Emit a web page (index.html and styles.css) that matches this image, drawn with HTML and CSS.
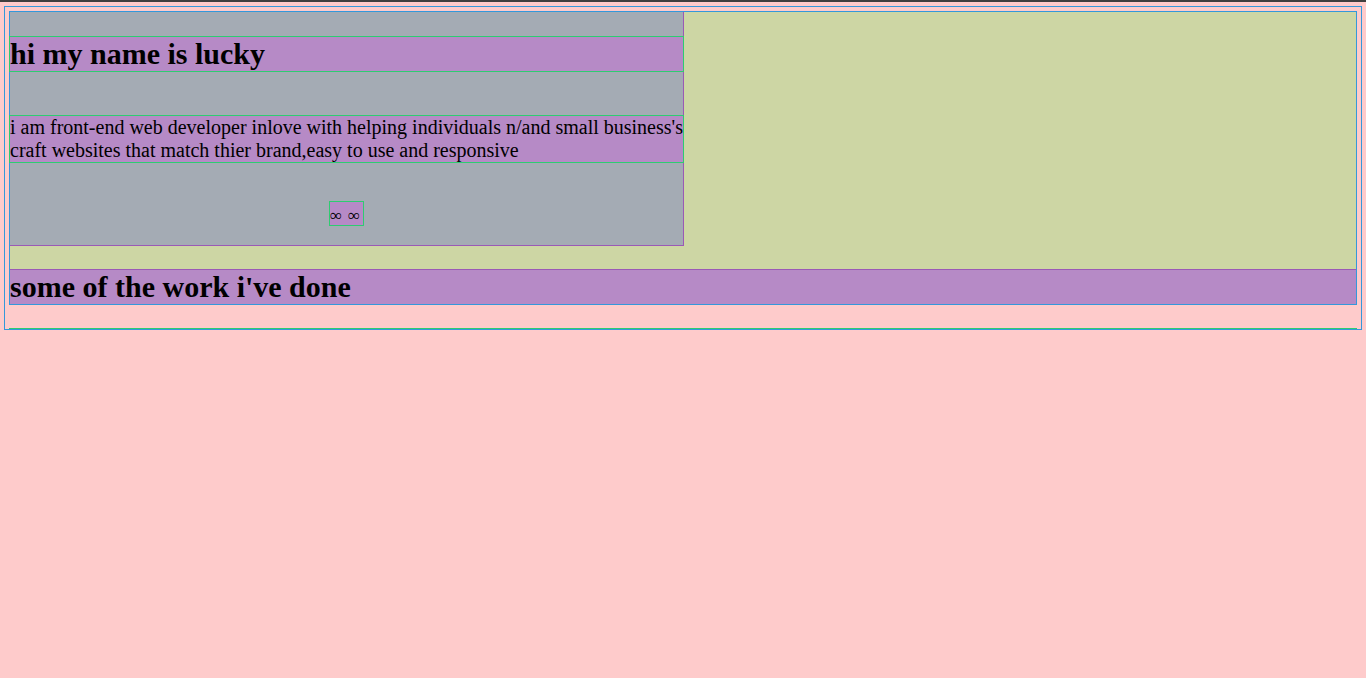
FILE: index.html
```html
<!DOCTYPE html>
<html lang="en">
<head>
<meta charset="utf-8">
<title>lucky</title>
<link rel="stylesheet" href="styles.css">
</head>
<body>
<div class="frame">
  <main class="content">
    <section class="hero">
      <div class="intro">
        <h1 class="intro-title">hi my name is lucky</h1>
        <p class="intro-text">i am front-end web developer inlove with helping individuals n/and small business's craft websites that match thier brand,easy to use and responsive</p>
        <div class="actions">
          <button class="btn" type="button"><span class="ico">∞</span><span class="ico">∞</span></button>
        </div>
      </div>
    </section>
    <h2 class="section-title">some of the work i've done</h2>
  </main>
  <div class="rule"></div>
</div>
</body>
</html>
```

FILE: styles.css
```css
html {
  background: #fecbcb;
}

body {
  margin: 0;
  border-top: 2px solid #3f3f3f;
  font-family: "Liberation Serif", "Times New Roman", serif;
  font-size: 20px;
  color: #000;
}

.frame {
  margin: 4px 4px 0;
  padding: 4px 4px 0;
  border: 1px solid #3498db;
}

.content {
  border: 1px solid #3498db;
}

.hero {
  background: #cdd6a4;
  border-bottom: 1px solid #9b59b6;
  padding-bottom: 23px;
}

.intro {
  width: 50%;
  background: #a4abb4;
  border-right: 1px solid #9b59b6;
  border-bottom: 1px solid #9b59b6;
  display: flex;
  flex-direction: column;
}

.intro-title {
  margin: 25px 0;
  font-size: 30px;
  line-height: 34px;
  font-weight: bold;
  background: #b68ac6;
  outline: 1px solid #2ecc71;
}

.intro-text {
  margin: 20px 0;
  font-size: 20px;
  line-height: 23px;
  background: #b68ac6;
  outline: 1px solid #2ecc71;
}

.actions {
  margin: 20px 0;
  display: flex;
  justify-content: center;
}

.btn {
  box-sizing: border-box;
  width: 33px;
  height: 23px;
  padding: 0 3px 0 0;
  margin: 0;
  border: none;
  background: #b68ac6;
  box-shadow: 0 0 0 1px #2ecc71;
  font-family: "Liberation Serif", serif;
  font-size: 17px;
  line-height: 23px;
  color: #000;
  display: flex;
  justify-content: space-between;
  align-items: center;
}

.ico {
  display: block;
  font-size: 17px;
  padding-top: 3px;
}

.section-title {
  margin: 0;
  font-size: 30px;
  line-height: 34px;
  font-weight: bold;
  background: #b68ac6;
}

.rule {
  margin-top: 23px;
  border-bottom: 1px solid #2ecc71;
}
```
